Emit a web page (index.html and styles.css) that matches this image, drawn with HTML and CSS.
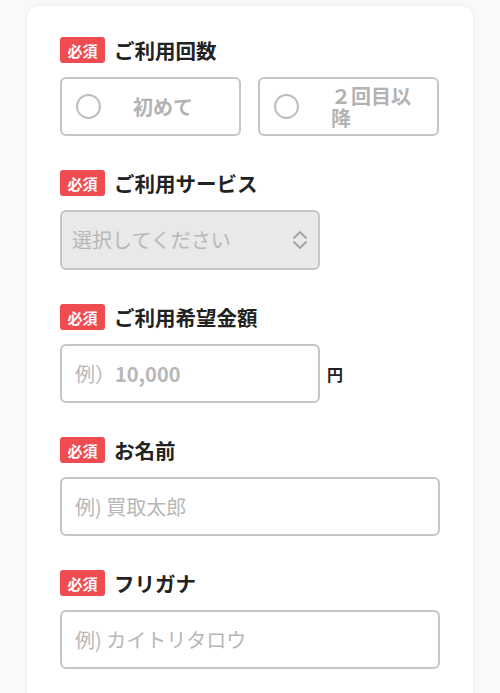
FILE: index.html
```html
<!DOCTYPE html>
<html lang="ja">
<head>
<meta charset="utf-8">
<link rel="stylesheet" href="styles.css">
</head>
<body>
<div class="card">
  <div class="section">
    <div class="head"><span class="badge">必須</span><span class="label">ご利用回数</span></div>
    <div class="radios">
      <label class="radio"><span class="circle"></span><span class="rtext">初めて</span></label>
      <label class="radio"><span class="circle"></span><span class="rtext">２回目以降</span></label>
    </div>
  </div>
  <div class="section">
    <div class="head"><span class="badge">必須</span><span class="label">ご利用サービス</span></div>
    <div class="select">
      <span class="ph">選択してください</span>
      <svg class="chev" width="16" height="20" viewBox="0 0 16 20"><path d="M2 8 L8 2 L14 8 M2 12 L8 18 L14 12" fill="none" stroke="#a6a6a6" stroke-width="2" stroke-linecap="round" stroke-linejoin="round"/></svg>
    </div>
  </div>
  <div class="section">
    <div class="head"><span class="badge">必須</span><span class="label">ご利用希望金額</span></div>
    <div class="amount">
      <div class="input short"><span class="ph">例）<b>10,000</b></span></div>
      <span class="yen">円</span>
    </div>
  </div>
  <div class="section">
    <div class="head"><span class="badge">必須</span><span class="label">お名前</span></div>
    <div class="input"><span class="ph">例) 買取太郎</span></div>
  </div>
  <div class="section">
    <div class="head"><span class="badge">必須</span><span class="label">フリガナ</span></div>
    <div class="input"><span class="ph">例) カイトリタロウ</span></div>
  </div>
</div>
</body>
</html>
```
FILE: styles.css
```css
* { box-sizing: border-box; }
html, body { margin: 0; padding: 0; }
body {
  background: #f9f9f9;
  font-family: "Noto Sans CJK JP", "Noto Sans", sans-serif;
  height: 693px;
  overflow: hidden;
}
.card {
  margin: 6px 0 0 27px;
  width: 446px;
  background: #fff;
  border-radius: 12px;
  box-shadow: 0 0 4px rgba(0,0,0,0.07);
  padding: 31px 32px 40px 33px;
  min-height: 720px;
}
.section { margin-bottom: 34px; }
.head {
  display: flex;
  align-items: center;
  height: 26px;
  margin-bottom: 14px;
}
.badge {
  display: inline-flex;
  align-items: center;
  justify-content: center;
  width: 45px;
  height: 26px;
  background: #ef4c52;
  color: #fff;
  font-size: 15px;
  font-weight: 700;
  border-radius: 3px;
  line-height: 1;
}
.label {
  margin-left: 9px;
  font-size: 20.5px;
  font-weight: 700;
  color: #222;
  line-height: 1;
}
.radios {
  display: flex;
  gap: 17px;
}
.radio {
  width: 181px;
  height: 59px;
  border: 2px solid #c6c6c6;
  border-radius: 6px;
  display: flex;
  align-items: center;
  padding: 0 18px 0 14px;
}
.circle {
  flex: none;
  width: 25px;
  height: 25px;
  border: 2px solid #bdbdbd;
  border-radius: 50%;
  margin-right: 32px;
}
.rtext {
  font-size: 20px;
  font-weight: 700;
  color: #b3b3b3;
  line-height: 22px;
}
.select {
  width: 260px;
  height: 60px;
  border: 2px solid #c6c6c6;
  border-radius: 6px;
  background: #e9e9e9;
  display: flex;
  align-items: center;
  justify-content: space-between;
  padding: 0 10px 0 10px;
}
.chev { display: block; }
.ph {
  font-size: 20px;
  color: #b7b7b7;
  line-height: 1;
}
.ph b { font-weight: 700; }
.amount {
  display: flex;
  align-items: center;
}
.input {
  width: 380px;
  height: 59px;
  border: 2px solid #c6c6c6;
  border-radius: 6px;
  display: flex;
  align-items: center;
  padding: 0 13px;
}
.input.short { width: 260px; }
.yen {
  margin-left: 7px;
  font-size: 16px;
  font-weight: 700;
  color: #222;
}
```
